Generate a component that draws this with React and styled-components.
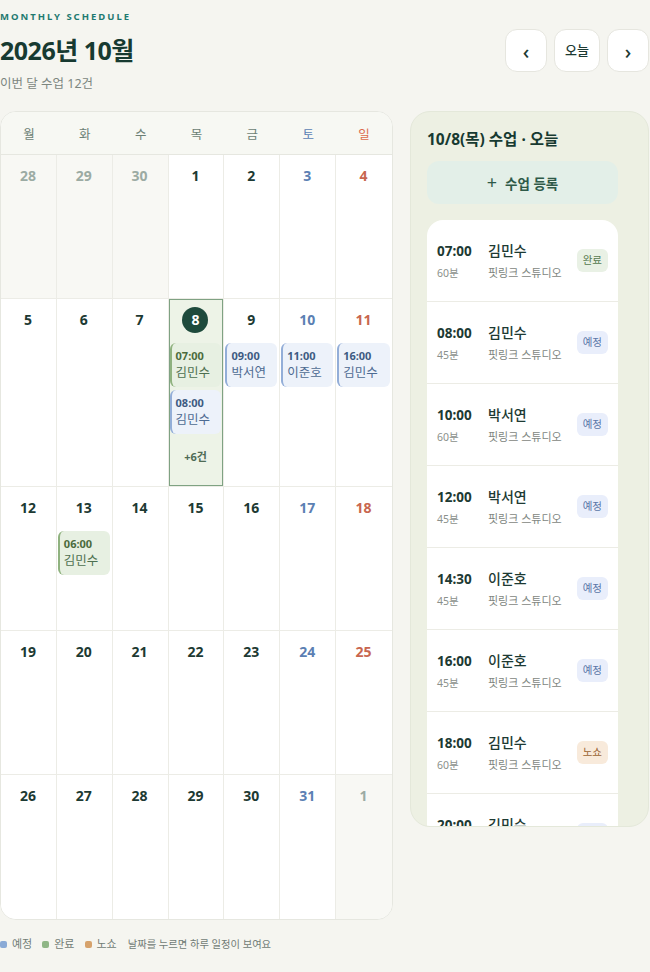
import styled, { createGlobalStyle } from "styled-components";

const GlobalStyle = createGlobalStyle`
    html, body {
        margin: 0;
        padding: 0;
        background: #f5f5f0;
        font-family: "Noto Sans", "Noto Sans CJK KR", sans-serif;
        color: #1d3a33;
    }
    * { box-sizing: border-box; }
`

const WEEKDAYS = ["월", "화", "수", "목", "금", "토", "일"]

const weeks = [
    [[28, true], [29, true], [30, true], [1], [2], [3], [4]],
    [[5], [6], [7], [8], [9], [10], [11]],
    [[12], [13], [14], [15], [16], [17], [18]],
    [[19], [20], [21], [22], [23], [24], [25]],
    [[26], [27], [28], [29], [30], [31], [1, true]],
]

const monthEvents = {
    8: { items: [{ time: "07:00", name: "김민수", status: "done" }, { time: "08:00", name: "김민수", status: "planned" }], more: 6 },
    9: { items: [{ time: "09:00", name: "박서연", status: "planned" }] },
    10: { items: [{ time: "11:00", name: "이준호", status: "planned" }] },
    11: { items: [{ time: "16:00", name: "김민수", status: "planned" }] },
    13: { items: [{ time: "06:00", name: "김민수", status: "done" }] },
}

const todayList = [
    { time: "07:00", mins: 60, name: "김민수", status: "done" },
    { time: "08:00", mins: 45, name: "김민수", status: "planned" },
    { time: "10:00", mins: 60, name: "박서연", status: "planned" },
    { time: "12:00", mins: 45, name: "박서연", status: "planned" },
    { time: "14:30", mins: 45, name: "이준호", status: "planned" },
    { time: "16:00", mins: 45, name: "이준호", status: "planned" },
    { time: "18:00", mins: 60, name: "김민수", status: "noshow" },
    { time: "20:00", mins: 60, name: "김민수", status: "planned" },
]

const statusLabel = { done: "완료", planned: "예정", noshow: "노쇼" }

const chipColors = {
    done: { bg: "#e7f0e2", bar: "#8fb27f", time: "#4b6b3c", name: "#4c6f4f" },
    planned: { bg: "#edf2fa", bar: "#93aed8", time: "#3d5b82", name: "#4d6b92" },
}

const badgeColors = {
    done: { bg: "#e9f1e5", fg: "#557a50" },
    planned: { bg: "#e9eefb", fg: "#5a76a8" },
    noshow: { bg: "#f8eadb", fg: "#9a6332" },
}

const dayColor = (col, muted) => {
    if (muted) return "#9caba3"
    if (col === 5) return "#5b7fb3"
    if (col === 6) return "#c8664f"
    return "#1d3a33"
}

const App = () => {
    return <>
    <GlobalStyle />
    <Page>
        <Header>
            <div>
                <Eyebrow>MONTHLY SCHEDULE</Eyebrow>
                <Title>2026년 10월</Title>
                <Subtitle>이번 달 수업 12건</Subtitle>
            </div>
            <NavGroup>
                <NavButton aria-label="이전 달">‹</NavButton>
                <NavButton $text>오늘</NavButton>
                <NavButton aria-label="다음 달">›</NavButton>
            </NavGroup>
        </Header>

        <Main>
            <div>
                <Calendar>
                    {WEEKDAYS.map((d, i) => <WeekdayCell key={d} $col={i}>{d}</WeekdayCell>)}
                    {weeks.map((week, w) => week.map(([day, muted], col) => {
                        const ev = !muted && monthEvents[day]
                        const today = !muted && day === 8
                        return <DayCell key={`${w}-${col}`} $muted={muted} $today={today} $lastCol={col === 6} $lastRow={w === weeks.length - 1}>
                            <DayNum $today={today} style={{ color: today ? "#fff" : dayColor(col, muted) }}>{day}</DayNum>
                            {ev && <ChipList>
                                {ev.items.map((it) => <Chip key={it.time} $status={it.status}>
                                    <ChipTime $status={it.status}>{it.time}</ChipTime>
                                    <ChipName $status={it.status}>{it.name}</ChipName>
                                </Chip>)}
                            </ChipList>}
                            {ev && ev.more && <More>+{ev.more}건</More>}
                        </DayCell>
                    }))}
                </Calendar>
                <Legend>
                    <LegendItem><Dot $color="#8aaad6" />예정</LegendItem>
                    <LegendItem><Dot $color="#8fb686" />완료</LegendItem>
                    <LegendItem><Dot $color="#d6a26c" />노쇼</LegendItem>
                    <LegendHint>날짜를 누르면 하루 일정이 보여요</LegendHint>
                </Legend>
            </div>

            <Panel>
                <PanelTitle>10/8(목) 수업 · 오늘</PanelTitle>
                <AddButton><span>+</span>수업 등록</AddButton>
                <LessonList>
                    {todayList.map((l, i) => <LessonRow key={i}>
                        <TimeCol>
                            <LessonTime>{l.time}</LessonTime>
                            <LessonMins>{l.mins}분</LessonMins>
                        </TimeCol>
                        <InfoCol>
                            <LessonName>{l.name}</LessonName>
                            <LessonPlace>핏링크 스튜디오</LessonPlace>
                        </InfoCol>
                        <Badge $status={l.status}>{statusLabel[l.status]}</Badge>
                    </LessonRow>)}
                </LessonList>
            </Panel>
        </Main>
    </Page>
    </>
}

export default App

const Page = styled.div`
    width: 650px;
    padding: 10px 1px 20px 0;
`

const Header = styled.div`
    display: flex;
    justify-content: space-between;
    align-items: center;
`

const Eyebrow = styled.div`
    font-size: 9.5px;
    line-height: 14px;
    font-weight: 700;
    letter-spacing: 2px;
    color: #1f7a70;
`

const Title = styled.h1`
    margin: 10px 0 0;
    font-size: 25px;
    line-height: 32px;
    font-weight: 700;
    letter-spacing: -0.5px;
    color: #173a31;
`

const Subtitle = styled.div`
    margin-top: 9px;
    font-size: 12.5px;
    line-height: 18px;
    color: #7c8680;
`

const NavGroup = styled.div`
    display: flex;
    gap: 7px;
    margin-top: -3px;
`

const NavButton = styled.button`
    width: ${p => p.$text ? "46px" : "42px"};
    height: 43px;
    border: 1px solid #e6e6df;
    border-radius: 12px;
    background: #fff;
    font-family: inherit;
    font-size: ${p => p.$text ? "13px" : "20px"};
    font-weight: 500;
    color: #1d3a33;
    padding: 0;
    padding-top: ${p => p.$text ? "0" : "3px"};
    line-height: 1;
    cursor: pointer;
`

const Main = styled.div`
    display: grid;
    grid-template-columns: 393px 239px;
    gap: 17px;
    align-items: start;
    margin-top: 18px;
`

const Calendar = styled.div`
    display: grid;
    grid-template-columns: repeat(7, 1fr);
    grid-template-rows: 43px 144px 188px 144px 144px 144px;
    background: #fff;
    border: 1px solid #e6e7e0;
    border-radius: 16px;
    overflow: hidden;
`

const WeekdayCell = styled.div`
    display: flex;
    align-items: center;
    justify-content: center;
    font-size: 12.5px;
    background: #f7f8f3;
    border-bottom: 1px solid #e6e7e0;
    color: ${p => p.$col === 5 ? "#5b7fb3" : p.$col === 6 ? "#dc6a4c" : "#6c7f75"};
`

const DayCell = styled.div`
    display: flex;
    flex-direction: column;
    align-items: stretch;
    padding: 8px 2px 9px 1px;
    min-width: 0;
    background: ${p => p.$today ? "#edf3e7" : p.$muted ? "#f8f8f4" : "#fff"};
    border-right: ${p => p.$lastCol ? "none" : "1px solid #ecece6"};
    border-bottom: ${p => p.$lastRow ? "none" : "1px solid #ecece6"};
    box-shadow: ${p => p.$today ? "inset 0 0 0 1px #7fa283" : "none"};
`

const DayNum = styled.div`
    align-self: center;
    width: 26px;
    height: 26px;
    border-radius: 50%;
    text-align: center;
    line-height: 26px;
    font-size: 14px;
    font-weight: 700;
    background: ${p => p.$today ? "#1e4a3c" : "transparent"};
`

const ChipList = styled.div`
    display: flex;
    flex-direction: column;
    gap: 3px;
    margin-top: 10px;
`

const Chip = styled.div`
    height: 44px;
    padding: 5px 4px 5px 4px;
    border-radius: 6px;
    border-left: 2px solid ${p => chipColors[p.$status].bar};
    background: ${p => chipColors[p.$status].bg};
    overflow: hidden;
    white-space: nowrap;
`

const ChipTime = styled.div`
    font-size: 11px;
    line-height: 15px;
    font-weight: 700;
    color: ${p => chipColors[p.$status].time};
`

const ChipName = styled.div`
    font-size: 12.5px;
    line-height: 19px;
    color: ${p => chipColors[p.$status].name};
`

const More = styled.div`
    padding: 15px 0 12px;
    text-align: center;
    font-size: 11px;
    line-height: 16px;
    font-weight: 700;
    color: #4f6b55;
`

const Legend = styled.div`
    display: flex;
    align-items: center;
    gap: 10px;
    margin-top: 16px;
    font-size: 11px;
    line-height: 16px;
    color: #717c76;
`

const LegendItem = styled.span`
    display: flex;
    align-items: center;
    gap: 5px;
`

const Dot = styled.i`
    width: 7px;
    height: 7px;
    border-radius: 2px;
    background: ${p => p.$color};
`

const LegendHint = styled.span`
    margin-left: 1px;
    font-size: 10.3px;
`

const Panel = styled.div`
    display: flex;
    flex-direction: column;
    height: 716px;
    padding: 16px 30px 0 16px;
    background: #edf0e3;
    border: 1px solid #e4e8da;
    border-radius: 20px;
    overflow: hidden;
`

const PanelTitle = styled.div`
    font-size: 15.5px;
    line-height: 22px;
    font-weight: 700;
    color: #173a31;
`

const AddButton = styled.button`
    display: flex;
    align-items: center;
    justify-content: center;
    gap: 8px;
    height: 43px;
    margin-top: 11px;
    border: none;
    border-radius: 12px;
    background: #e3efe8;
    font-family: inherit;
    font-size: 13.5px;
    font-weight: 700;
    color: #2e5a48;
    cursor: pointer;

    span {
        font-size: 18px;
        font-weight: 400;
        line-height: 1;
        margin-top: -2px;
    }
`

const LessonList = styled.div`
    flex: 1;
    margin-top: 16px;
    background: #fff;
    border-radius: 16px 16px 0 0;
    overflow: hidden;
`

const LessonRow = styled.div`
    display: flex;
    align-items: center;
    height: 82px;
    padding: 0 10px;
    border-bottom: 1px solid #ececE5;
`

const TimeCol = styled.div`
    width: 51px;
    flex-shrink: 0;
`

const LessonTime = styled.div`
    font-size: 13.5px;
    line-height: 20px;
    font-weight: 700;
    color: #1d3a33;
`

const LessonMins = styled.div`
    margin-top: 4px;
    font-size: 10.5px;
    line-height: 16px;
    color: #8a908b;
`

const InfoCol = styled.div`
    flex: 1;
    min-width: 0;
`

const LessonName = styled.div`
    font-size: 14px;
    line-height: 20px;
    font-weight: 500;
    color: #1d3a33;
`

const LessonPlace = styled.div`
    margin-top: 4px;
    font-size: 11px;
    line-height: 16px;
    color: #7f8782;
    white-space: nowrap;
`

const Badge = styled.span`
    padding: 4px 6px;
    border-radius: 6px;
    font-size: 10.5px;
    line-height: 15px;
    background: ${p => badgeColors[p.$status].bg};
    color: ${p => badgeColors[p.$status].fg};
`
